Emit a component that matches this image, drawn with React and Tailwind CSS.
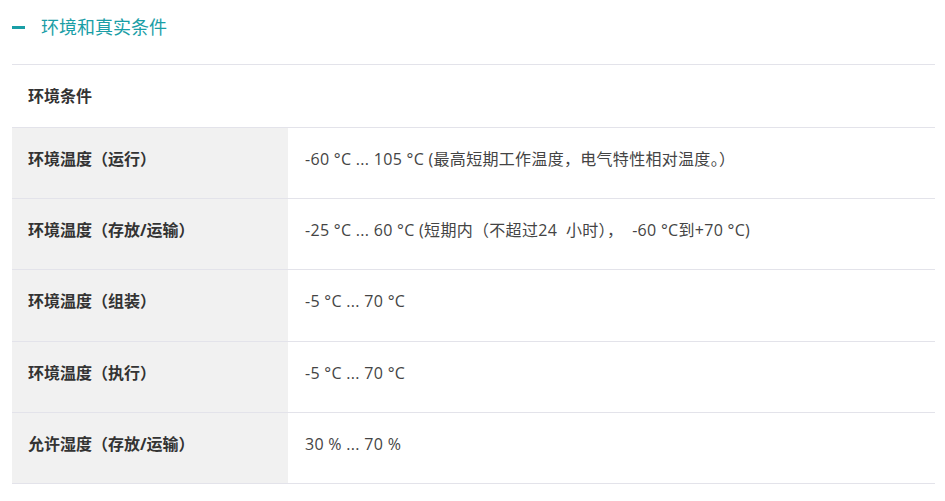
import React from "react";

const rows = [
  ["环境温度（运行）", "-60 °C ... 105 °C (最高短期工作温度，电气特性相对温度。）"],
  ["环境温度（存放/运输）", "-25 °C ... 60 °C (短期内（不超过24  小时），  -60 °C到+70 °C)"],
  ["环境温度（组装）", "-5 °C ... 70 °C"],
  ["环境温度（执行）", "-5 °C ... 70 °C"],
  ["允许湿度（存放/运输）", "30 % ... 70 %"],
];

export default function App() {
  return (
    <div
      className="w-[945px] h-[501px] bg-white overflow-hidden"
      style={{ fontFamily: '"Open Sans", "Noto Sans CJK SC", sans-serif' }}
    >
      <div className="flex items-center h-[54px] pl-[12px]">
        <span className="block w-[13px] h-[3px] bg-[#1a9ea6]" />
        <span className="ml-[16px] text-[18px] text-[#1a9ea6] leading-none">环境和真实条件</span>
      </div>
      <div className="ml-[12px] w-[923px] mt-[10px] border-t border-[#e3e3ea]">
        <div className="h-[63px] flex items-center pl-[16px] border-b border-[#e3e3ea]">
          <span className="text-[16px] font-bold text-[#333]">环境条件</span>
        </div>
        {rows.map(([k, v]) => (
          <div key={k} className="flex h-[71.2px] border-b border-[#e3e3ea]">
            <div className="w-[276px] bg-[#f1f1f1] flex items-center pl-[16px] pb-[8px]">
              <span className="text-[16px] font-bold text-[#333]">{k}</span>
            </div>
            <div className="flex-1 flex items-center pl-[17px] pb-[8px]">
              <span className="text-[16px] tracking-[0.3px] text-[#444] whitespace-pre">{v}</span>
            </div>
          </div>
        ))}
      </div>
    </div>
  );
}
